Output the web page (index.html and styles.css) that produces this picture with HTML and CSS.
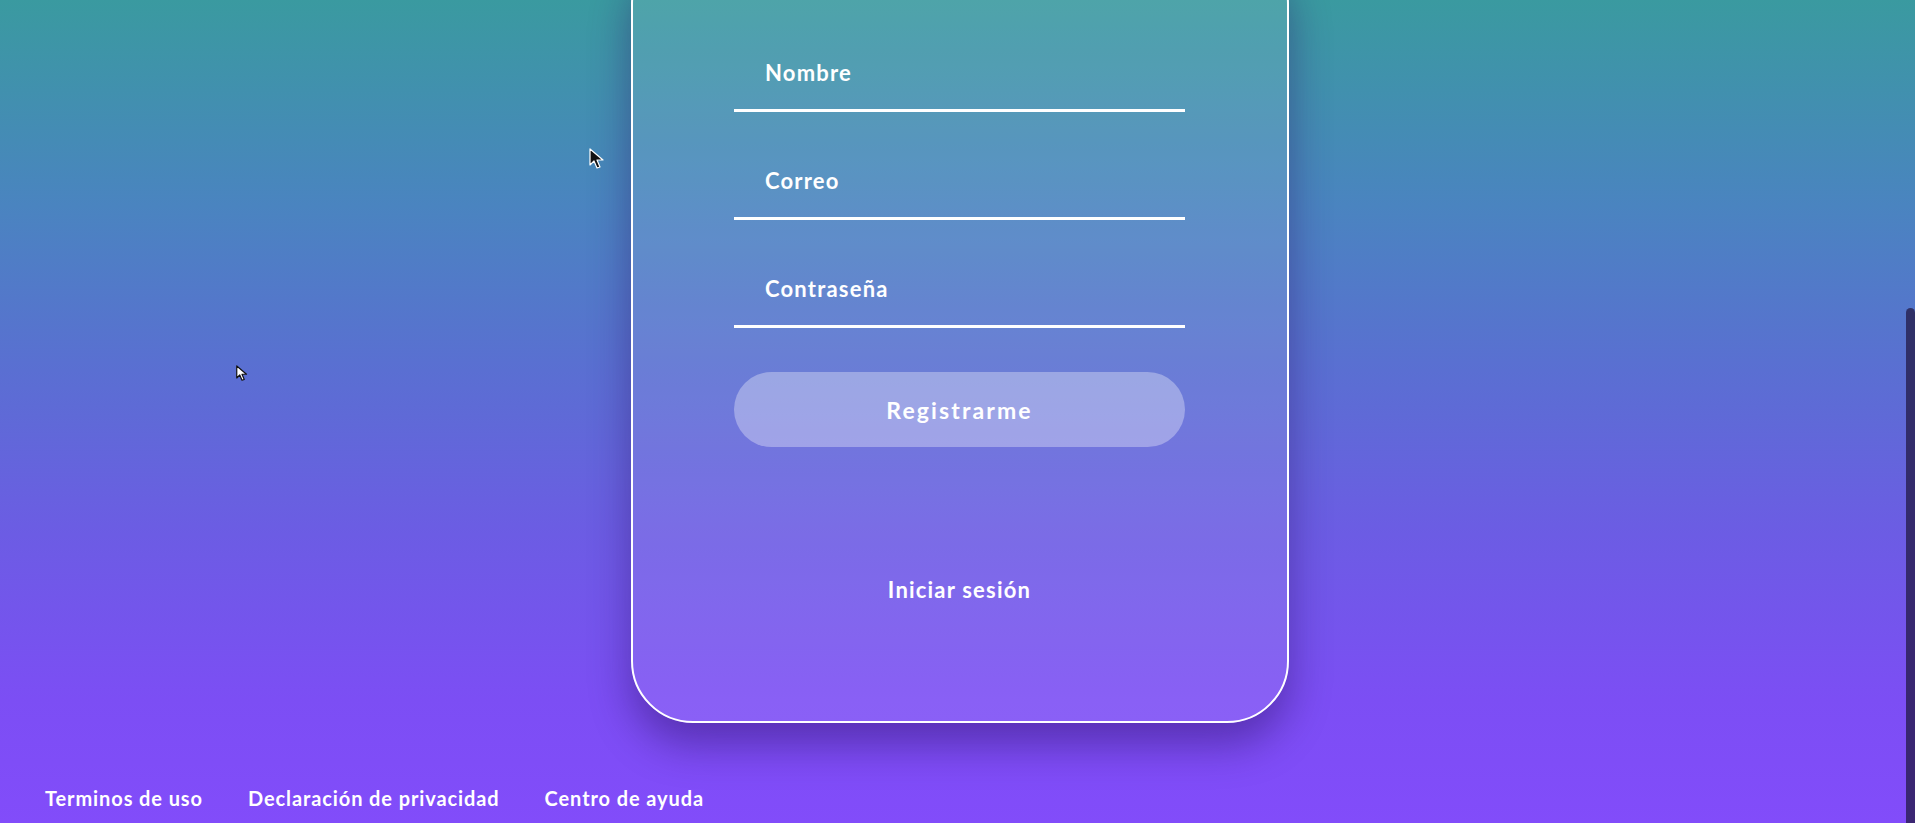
FILE: index.html
```html
<!DOCTYPE html>
<html lang="es">
<head>
  <meta charset="UTF-8" />
  <meta name="viewport" content="width=device-width, initial-scale=1.0" />
  <title>Registro</title>
  <link rel="stylesheet" href="styles.css">
</head>
<body>

  <!-- Tarjeta de registro -->
  <div class="card">
    <form class="form" onsubmit="return false">
      <label class="field"><span>Nombre</span></label>
      <label class="field"><span>Correo</span></label>
      <label class="field"><span>Contraseña</span></label>
      <button class="btn" type="submit">Registrarme</button>
      <a class="login" href="#">Iniciar sesión</a>
    </form>
  </div>

  <!-- Pie de pagina -->
  <footer class="footer">
    <a href="#">Terminos de uso</a>
    <a href="#">Declaración de privacidad</a>
    <a href="#">Centro de ayuda</a>
  </footer>

  <div class="scroll-thumb"></div>

  <svg class="cursor cursor-a" width="16" height="22" viewBox="0 0 16 22">
    <path d="M1 1 L1 17 L5 13 L8 20 L11 19 L8 12 L14 12 Z" fill="#111" stroke="#fff" stroke-width="1.2" stroke-linejoin="round"/>
  </svg>
  <svg class="cursor cursor-b" width="12" height="17" viewBox="0 0 16 22">
    <path d="M1 1 L1 17 L5 13 L8 20 L11 19 L8 12 L14 12 Z" fill="#fff" stroke="#111" stroke-width="1.6" stroke-linejoin="round"/>
  </svg>

</body>
</html>
```

FILE: styles.css
```css
body {
  margin: 0;
  height: 100vh;
  overflow: hidden;
  display: flex;
  flex-direction: column;
  font-family: 'Lato', 'Noto Sans', sans-serif;
  color: #fff;
  background: linear-gradient(180deg, #3a9aa0 0%, #4a84c0 25%, #5a6fd2 45%, #6c5ce4 65%, #7c4ef4 85%, #824cfa 100%);
}

/* Tarjeta (la parte de arriba queda fuera de pantalla) */
.card {
  box-sizing: border-box;
  width: 658px;
  height: 781px;
  margin: -58px 0 0 calc(50% - 327px);
  padding-top: 60px;
  border: 2.5px solid #fff;
  border-radius: 62px;
  background: rgba(255, 255, 255, 0.1);
  box-shadow: 0 22px 40px rgba(45, 15, 100, 0.45);
  flex-shrink: 0;
}

.form {
  width: 451px;
  margin: 0 auto;
  display: flex;
  flex-direction: column;
}

.field {
  box-sizing: border-box;
  height: 108px;
  display: flex;
  align-items: flex-end;
  padding: 0 0 24px 31px;
  border-bottom: 3px solid #fff;
  font-size: 22px;
  font-weight: 700;
  letter-spacing: 1.2px;
  line-height: 24px;
}

.btn {
  margin-top: 44px;
  height: 75px;
  border: none;
  border-radius: 38px;
  background: rgba(255, 255, 255, 0.33);
  color: #fff;
  font-family: inherit;
  font-size: 23px;
  font-weight: 700;
  letter-spacing: 2.1px;
  cursor: pointer;
}

.login {
  margin-top: 131px;
  align-self: center;
  color: #fff;
  text-decoration: none;
  font-size: 22px;
  font-weight: 700;
  letter-spacing: 1.2px;
  line-height: 24px;
}

/* Enlaces del pie */
.footer {
  margin-top: auto;
  display: flex;
  gap: 45px;
  padding: 0 0 13px 45px;
}

.footer a {
  color: #fff;
  text-decoration: none;
  font-size: 20px;
  font-weight: 700;
  letter-spacing: 0.9px;
  line-height: 24px;
}

.scroll-thumb {
  position: fixed;
  right: 0;
  top: 308px;
  bottom: 0;
  width: 9px;
  border-radius: 5px 5px 0 0;
  background: rgba(35, 25, 70, 0.75);
}

.cursor {
  position: fixed;
}

.cursor-a {
  left: 589px;
  top: 148px;
}

.cursor-b {
  left: 236px;
  top: 365px;
}
```
